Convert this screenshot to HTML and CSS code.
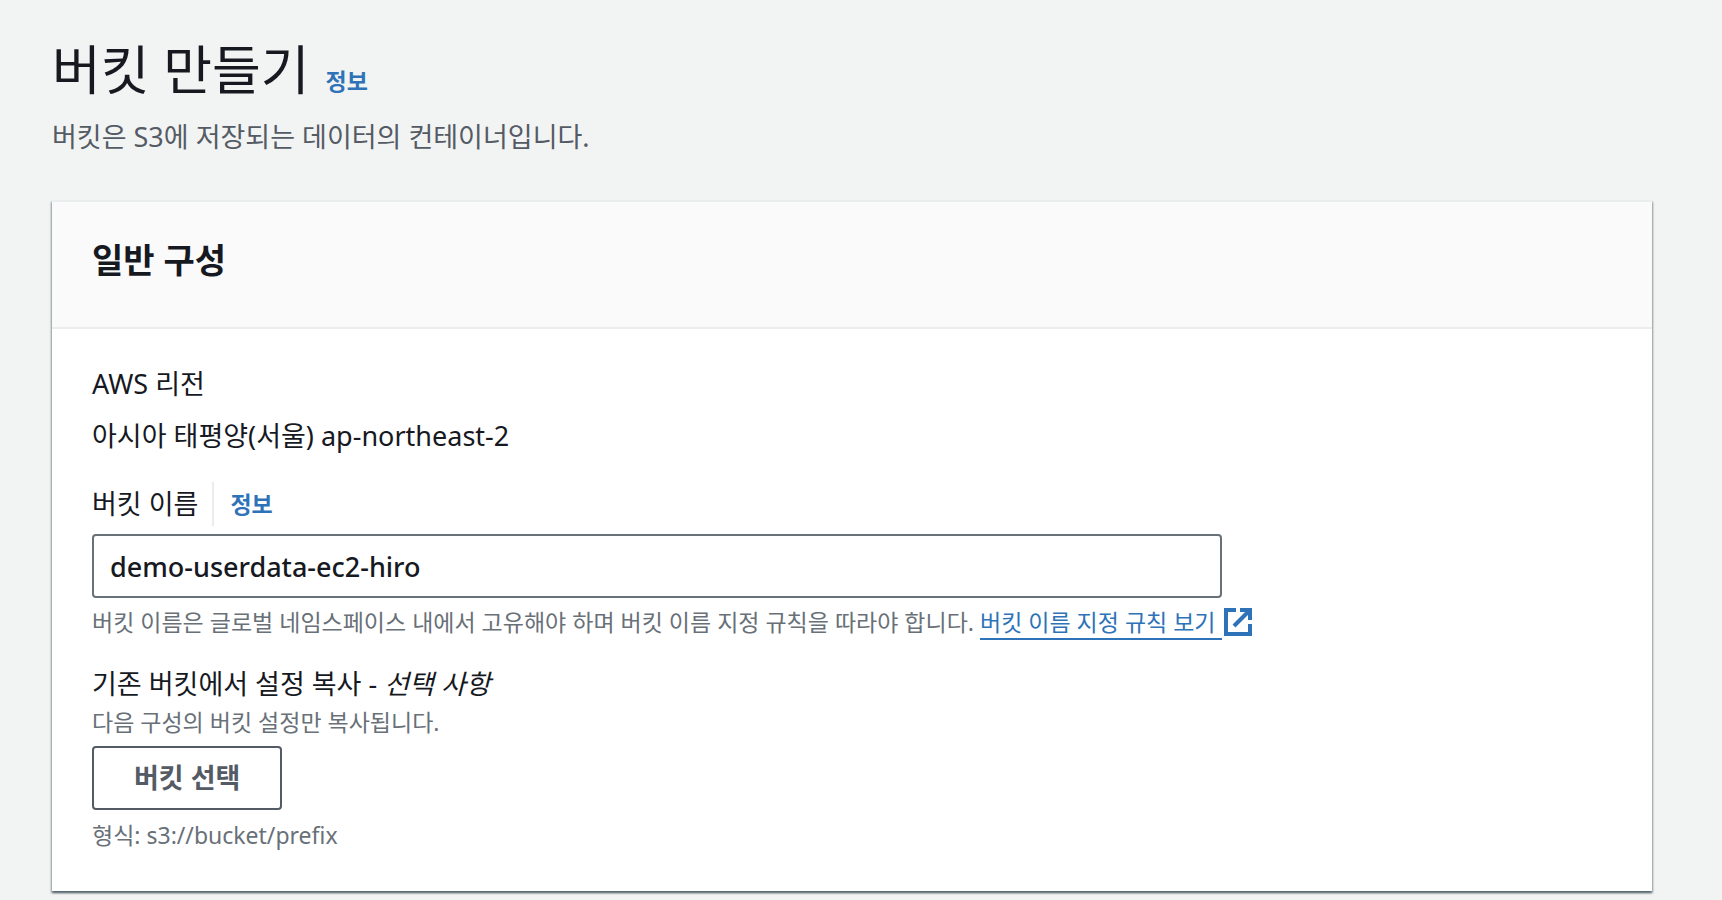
FILE: index.html
```html
<!DOCTYPE html>
<html lang="ko">
<head>
  <meta charset="UTF-8" />
  <meta name="viewport" content="width=device-width, initial-scale=1.0"/>
  <title>버킷 만들기</title>
  <link rel="stylesheet" href="styles.css">
</head>
<body>
  <header class="page-header">
    <div class="title-row">
      <h1>버킷 만들기</h1>
      <a class="info-link" href="#">정보</a>
    </div>
    <p class="description">버킷은 S3에 저장되는 데이터의 컨테이너입니다.</p>
  </header>

  <main class="container">
    <div class="container-header">
      <h2>일반 구성</h2>
    </div>

    <form class="container-body">
      <div class="field region">
        <div class="label">AWS 리전</div>
        <div class="value">아시아 태평양(서울) ap-northeast-2</div>
      </div>

      <div class="field name">
        <div class="label-row">
          <label class="label" for="bucketName">버킷 이름</label>
          <a class="info-link" href="#">정보</a>
        </div>
        <input type="text" id="bucketName" name="bucketName" value="demo-userdata-ec2-hiro">
        <p class="hint">버킷 이름은 글로벌 네임스페이스 내에서 고유해야 하며 버킷 이름 지정 규칙을 따라야 합니다. <a class="external" href="#"><span class="external-text">버킷 이름 지정 규칙 보기</span><svg class="external-icon" viewBox="0 0 28 28" aria-hidden="true"><path d="M12 2H2v24h24V16M16 2h10v10M26 2L10 18"/></svg></a></p>
      </div>

      <div class="field copy">
        <div class="label" id="copyLabel">기존 버킷에서 설정 복사 - <i>선택 사항</i></div>
        <p class="hint">다음 구성의 버킷 설정만 복사됩니다.</p>
        <button type="button" aria-describedby="copyLabel">버킷 선택</button>
        <p class="hint">형식: s3://bucket/prefix</p>
      </div>
    </form>
  </main>
</body>
</html>
```
FILE: styles.css
```css
* {
  box-sizing: border-box;
}
body {
  margin: 0;
  padding: 34px 70px 8px 52px;
  background-color: #f2f3f3;
  color: #16191f;
  font-family: "Noto Sans", "Noto Sans CJK KR", sans-serif;
  font-size: 27px;
  line-height: 40px;
}
h1, h2, p {
  margin: 0;
}

.page-header {
  margin-bottom: 43px;
}
.title-row {
  display: flex;
  align-items: baseline;
  gap: 16px;
}
h1 {
  font-size: 53px;
  font-weight: 400;
  line-height: 72px;
}
.description {
  margin-top: 11px;
  color: #545b64;
}
.info-link {
  color: #2e73b8;
  font-size: 23px;
  font-weight: 700;
  text-decoration: none;
}

.container {
  background-color: #fff;
  box-shadow: 0 2px 2px rgba(0, 28, 36, 0.3), 1px 2px 2px rgba(0, 28, 36, 0.3), -1px 2px 2px rgba(0, 28, 36, 0.3);
}
.container-header {
  padding: 36px 40px 45px;
  background-color: #fafafa;
  border-top: 2px solid #eaeded;
  border-bottom: 2px solid #eaeded;
}
h2 {
  font-size: 34px;
  font-weight: 700;
  line-height: 44px;
}
.container-body {
  display: flex;
  flex-direction: column;
  gap: 26px;
  padding: 35px 40px 40px;
}
.value {
  margin-top: 12px;
}
.label-row {
  display: flex;
  align-items: center;
  height: 44px;
}
.label-row .info-link {
  margin-left: 14px;
  padding-left: 16px;
  border-left: 2px solid #eaeded;
  line-height: 44px;
}
input {
  display: block;
  width: 100%;
  max-width: 1130px;
  height: 64px;
  margin: 8px 0;
  padding: 0 16px;
  border: 2px solid #687078;
  border-radius: 4px;
  background-color: #fff;
  color: #16191f;
  font: inherit;
  font-weight: 500;
}
.hint {
  color: #687078;
  font-size: 23px;
  line-height: 32px;
}
.copy .label {
  margin-bottom: 2px;
}
.external {
  color: #2e73b8;
  text-decoration: none;
}
.external-text {
  padding-right: 6px;
  border-bottom: 2px solid #2e73b8;
}
.external-icon {
  width: 28px;
  height: 28px;
  margin-left: 2px;
  vertical-align: -5px;
  fill: none;
  stroke: #2e73b8;
  stroke-width: 4;
}
button {
  display: block;
  height: 64px;
  margin: 8px 0 9px;
  padding: 0 40px;
  border: 2px solid #545b64;
  border-radius: 4px;
  background-color: #fff;
  color: #545b64;
  font: inherit;
  font-weight: 700;
  cursor: pointer;
}
button:hover {
  background-color: #fafafa;
}
```
